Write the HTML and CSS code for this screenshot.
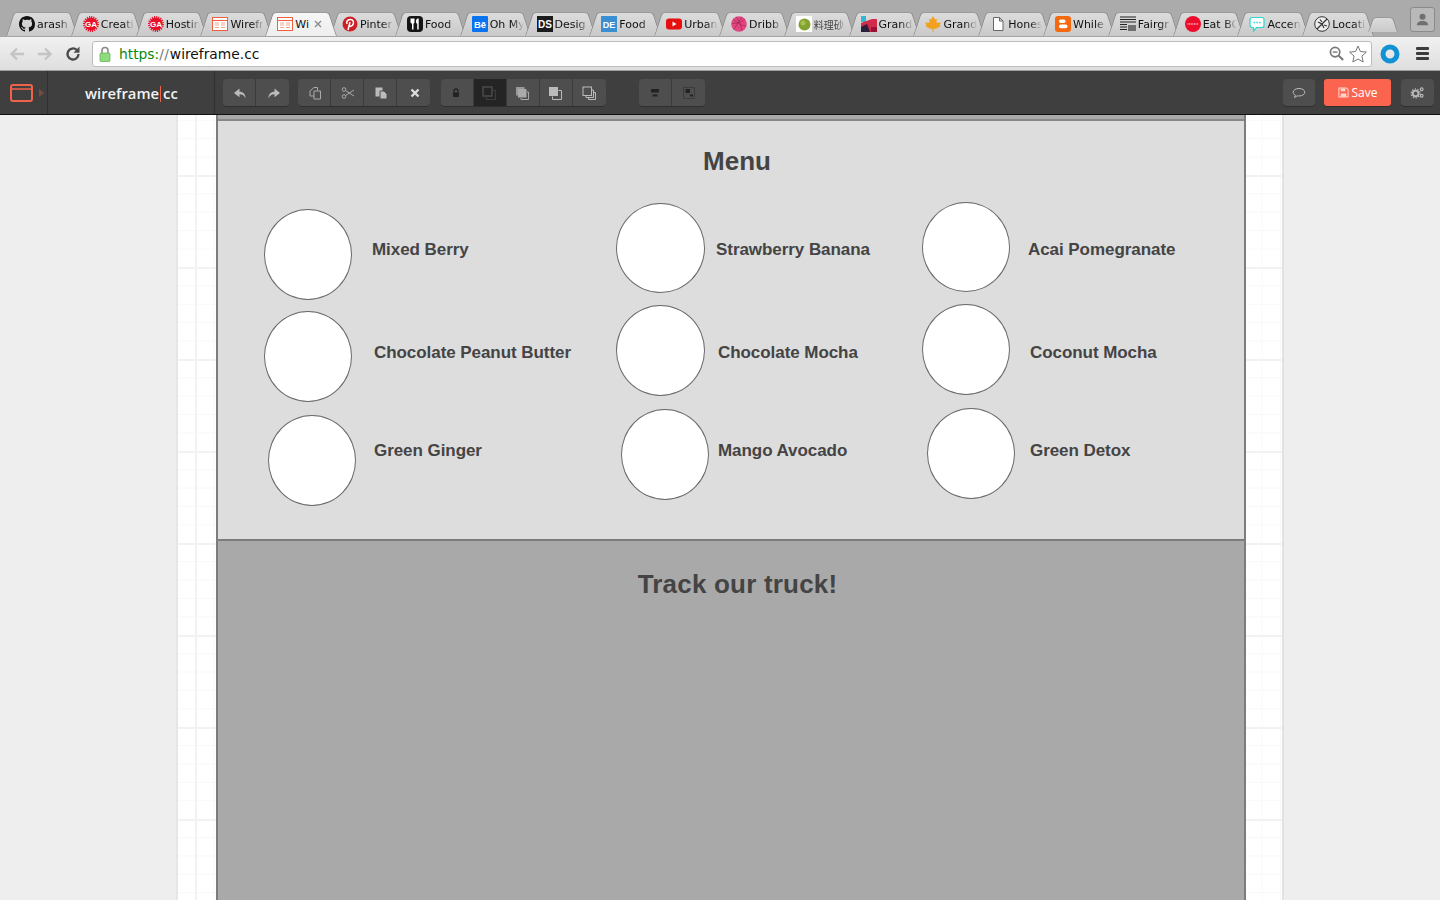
FILE: index.html
```html
<!DOCTYPE html>
<html lang="en">
<head>
<meta charset="utf-8">
<title>wireframe.cc</title>
<link rel="stylesheet" href="styles.css">
</head>
<body>
<div class="tabstrip">
  <div class="tab tab-first"><svg class="fav" viewBox="0 0 16 16"><path fill="#111" d="M8 0C3.58 0 0 3.58 0 8c0 3.54 2.29 6.53 5.47 7.59.4.07.55-.17.55-.38 0-.19-.01-.82-.01-1.49-2.01.37-2.53-.49-2.69-.94-.09-.23-.48-.94-.82-1.13-.28-.15-.68-.52-.01-.53.63-.01 1.08.58 1.23.82.72 1.21 1.87.87 2.33.66.07-.52.28-.87.51-1.07-1.78-.2-3.64-.89-3.64-3.95 0-.87.31-1.59.82-2.15-.08-.2-.36-1.02.08-2.12 0 0 .67-.21 2.2.82.64-.18 1.32-.27 2-.27.68 0 1.36.09 2 .27 1.53-1.04 2.2-.82 2.2-.82.44 1.1.16 1.92.08 2.12.51.56.82 1.27.82 2.15 0 3.07-1.87 3.75-3.65 3.95.29.25.54.73.54 1.48 0 1.07-.01 1.93-.01 2.2 0 .21.15.46.55.38A8.013 8.013 0 0016 8c0-4.42-3.58-8-8-8z"/></svg><span class="title">arash</span></div>
  <div class="tab"><svg class="fav" viewBox="0 0 16 16"><circle cx="8" cy="8" r="6.5" fill="#e8102a" stroke="#e8102a" stroke-width="3" stroke-dasharray="1 1"/><text class="favtext" x="8" y="11" font-size="8" fill="#fff">GA</text></svg><span class="title">Creati</span></div>
  <div class="tab"><svg class="fav" viewBox="0 0 16 16"><circle cx="8" cy="8" r="6.5" fill="#e8102a" stroke="#e8102a" stroke-width="3" stroke-dasharray="1 1"/><text class="favtext" x="8" y="11" font-size="8" fill="#fff">GA</text></svg><span class="title">Hostin</span></div>
  <div class="tab"><svg class="fav" viewBox="0 0 16 16"><rect x=".5" y="1.5" width="15" height="13" fill="#fff" stroke="#f0603c"/><path d="M1 4.5h14" stroke="#f0603c"/><path d="M3 7h4M3 9h4M3 11.5h4M9 7h4M9 9h4M9 11.5h4" stroke="#f5a58c"/></svg><span class="title">Wirefr</span></div>
  <div class="tab tab-active"><svg class="fav" viewBox="0 0 16 16"><rect x=".5" y="1.5" width="15" height="13" fill="#fff" stroke="#f0603c"/><path d="M1 4.5h14" stroke="#f0603c"/><path d="M3 7h4M3 9h4M3 11.5h4M9 7h4M9 9h4M9 11.5h4" stroke="#f5a58c"/></svg><span class="title title-short">Wi</span><svg class="close" viewBox="0 0 8 8"><path d="M1 1l6 6M7 1L1 7" stroke="#888" stroke-width="1.3"/></svg></div>
  <div class="tab"><svg class="fav" viewBox="0 0 16 16"><circle cx="8" cy="8" r="7.5" fill="#cb2027"/><path d="M6 14l2-8M5 8c-1-3 1-4.500 3.500-4.500S12 5.500 11.200 8 8 10.500 7.300 9.500" fill="none" stroke="#fff" stroke-width="1.500"/></svg><span class="title">Pinter</span></div>
  <div class="tab"><svg class="fav" viewBox="0 0 16 16"><rect width="16" height="16" rx="4" fill="#151515"/><path d="M3.500 2.500v3.500c0 1 1 1.500 1.500 1.500v6h1.500v-6c.5 0 1-.5 1-1.500V2.500M5.200 2.500v3M11 2.500c-1.500 0-2 1.500-2 3s.7 2.200 1.200 2.200v5.800h1.500V2.500z" fill="#fff"/></svg><span class="title">Food</span></div>
  <div class="tab"><svg class="fav" viewBox="0 0 16 16"><rect width="16" height="16" rx="1" fill="#0a74f0"/><text class="favtext" x="8" y="11.500" font-size="9.500" fill="#fff">Bē</text></svg><span class="title">Oh My</span></div>
  <div class="tab"><svg class="fav" viewBox="0 0 16 16"><rect width="16" height="16" fill="#1b1b1b"/><text class="favtext" x="8" y="12" font-size="10" fill="#fff">DS</text></svg><span class="title">Desig</span></div>
  <div class="tab"><svg class="fav" viewBox="0 0 16 16"><rect width="16" height="16" fill="#3a8fd2"/><text class="favtext" x="8" y="11.500" font-size="9" fill="#fff">DE</text></svg><span class="title">Food</span></div>
  <div class="tab"><svg class="fav" viewBox="0 0 16 16"><rect y="2.500" width="16" height="11" rx="3" fill="#e61010"/><path d="M6.500 5.500l4 2.500-4 2.500z" fill="#fff"/></svg><span class="title">Urban</span></div>
  <div class="tab"><svg class="fav" viewBox="0 0 16 16"><circle cx="8" cy="8" r="7.800" fill="#e2457f"/><path d="M2.500 3.500C6 7 11 10 15 10M11 1C8 6 4.500 10.500 3 13.500M5 1c3 3.500 5.500 9 6 14M1 7.500C5 7.500 10 7 13.500 3.500" fill="none" stroke="#a92a5a" stroke-width=".8"/></svg><span class="title">Dribb</span></div>
  <div class="tab"><svg class="fav" viewBox="0 0 16 16"><rect width="16" height="16" fill="#fff"/><circle cx="8.500" cy="8.500" r="6" fill="#84a22f"/><circle cx="7" cy="7" r="2.500" fill="#a6bf53"/></svg><span class="title title-cjk">料理砂</span></div>
  <div class="tab"><svg class="fav" viewBox="0 0 16 16"><path d="M0 0h5v6H0z" fill="#35b5d0"/><path d="M0 7l11-4 5 0v13H0z" fill="#d12a4a"/><path d="M0 11l6-3 3 8H0z" fill="#2b1d3c"/><path d="M10 11h6v5h-6z" fill="#9c1237"/></svg><span class="title">Grand</span></div>
  <div class="tab"><svg class="fav" viewBox="0 0 16 16"><path d="M8 0l2 3.500 2-.8-.7 3.800L16 6.800l-1.500 2.500 1 1-4.500 2.500H8.500V16h-1v-3.200H5L.5 10.300l1-1L0 6.800l4.700-.3L4 2.700l2 .8z" fill="#f2a11f"/></svg><span class="title">Grand</span></div>
  <div class="tab"><svg class="fav" viewBox="0 0 16 16"><path d="M3.500 1.500h6l3.500 3.500v9.500H3.500zM9.500 1.500V5H13" fill="#fff" stroke="#666"/></svg><span class="title">Hones</span></div>
  <div class="tab"><svg class="fav" viewBox="0 0 16 16"><rect width="16" height="16" rx="3" fill="#f4690f"/><rect x="4" y="3.500" width="6.500" height="3.500" rx="1.700" fill="#fff"/><rect x="4" y="8.500" width="8.500" height="3.700" rx="1.800" fill="#fff"/></svg><span class="title">While</span></div>
  <div class="tab"><svg class="fav" viewBox="0 0 16 16"><path d="M0 1h16M0 3.500h16M0 6h16M0 8.500h7M0 11h7M0 13.500h7M9 9v6M11 9v6M13 9v6M15 9v6" stroke="#222" stroke-width="1.100"/></svg><span class="title">Fairgr</span></div>
  <div class="tab"><svg class="fav" viewBox="0 0 16 16"><circle cx="8" cy="8" r="8" fill="#ee0c2c"/><path d="M2.500 8h11" stroke="#ffb0b0" stroke-width="1.500" stroke-dasharray="1 .6"/></svg><span class="title">Eat BC</span></div>
  <div class="tab"><svg class="fav" viewBox="0 0 16 16"><path d="M3 1.500h10c1 0 2 1 2 2v6c0 1-1 2-2 2H7.500L4.500 15v-3.500H3c-1 0-2-1-2-2v-6c0-1 1-2 2-2z" fill="#fff" stroke="#25d9cf" stroke-width="1.200"/><path d="M4.500 6.500h7" stroke="#25d9cf" stroke-width="1.500" stroke-dasharray="1.500 1.300"/></svg><span class="title">Accen</span></div>
  <div class="tab"><svg class="fav" viewBox="0 0 16 16"><circle cx="8" cy="8" r="7.300" fill="#eee" stroke="#333"/><path d="M3 13L13 3M4 6l4 2 2 4M6 3.500l2 2.500M10 9l3 1" fill="none" stroke="#333" stroke-width="1.200"/></svg><span class="title">Locati</span></div>
  <div class="tab tab-new"></div>
  <div class="profile"><svg viewBox="0 0 16 16" class="profile-icon"><circle cx="8" cy="5" r="3.200" fill="#6f6f6f"/><path d="M2 14c0-3.500 3-4.500 6-4.500s6 1 6 4.500z" fill="#6f6f6f"/></svg></div>
</div>

<div class="navbar">
  <svg class="nav-ic" viewBox="0 0 18 18"><path d="M16 9H4M9 3.500L3.500 9 9 14.500" fill="none" stroke="#c4c4c4" stroke-width="2.400"/></svg>
  <svg class="nav-ic" viewBox="0 0 18 18"><path d="M2 9h12M9 3.500L14.500 9 9 14.500" fill="none" stroke="#c4c4c4" stroke-width="2.400"/></svg>
  <svg class="nav-ic" viewBox="0 0 18 18"><path d="M14.500 9a5.500 5.500 0 1 1-1.800-4.100" fill="none" stroke="#4a4a4a" stroke-width="2.300"/><path d="M15.500 1.500v6.200H9.500z" fill="#4a4a4a"/></svg>
  <div class="omnibox">
    <svg class="lock" viewBox="0 0 12 16"><path d="M3 7V4.500a3 3 0 0 1 6 0V7" fill="none" stroke="#888" stroke-width="1.500"/><rect x="1" y="7" width="10" height="8.500" rx="1" fill="#8fdc7c" stroke="#63a955" stroke-width=".7"/></svg>
    <span class="url"><span class="url-https">https:</span><span class="url-slash">/ /</span>wireframe.cc</span>
    <svg class="omni-ic zoomout" viewBox="0 0 16 16"><circle cx="6.500" cy="6.500" r="5" fill="none" stroke="#777" stroke-width="1.800"/><path d="M10.500 10.500l4.500 4.500" stroke="#777" stroke-width="2.200"/><path d="M4 6.500h5" stroke="#777" stroke-width="1.500"/></svg>
    <svg class="omni-ic star" viewBox="0 0 18 18"><path d="M9 1l2.400 5.500 6 .6-4.500 4 1.300 5.900L9 14l-5.200 3 1.300-5.900-4.500-4 6-.6z" fill="#fff" stroke="#777"/></svg>
  </div>
  <svg class="ext" viewBox="0 0 20 20"><circle cx="10" cy="10" r="7" fill="none" stroke="#1192d4" stroke-width="5"/></svg>
  <div class="burger"><i></i><i></i><i></i></div>
</div>

<header class="appbar">
  <div class="brandicon">
    <svg class="brand-svg" viewBox="0 0 23 18"><rect x="1" y="1" width="21" height="16" rx="2" fill="none" stroke="#f0634a" stroke-width="2"/><path d="M1 5h21" stroke="#f0634a" stroke-width="1.500"/></svg>
    <span class="caret"></span>
  </div>
  <div class="brand">wireframe<span class="brand-sep"></span>cc</div>
  <div class="group group-history">
    <div class="btn"><svg class="ic" viewBox="0 0 14 14"><path d="M12.500 12.500c0-4.500-2.200-6.800-6-6.800V2.500L1 7l5.500 4.300V8.300c3 0 5 1.500 6 4.200z" fill="#bbb"/></svg></div>
    <div class="btn"><svg class="ic" viewBox="0 0 14 14"><path d="M1.500 12.500c0-4.500 2.200-6.800 6-6.800V2.500L13 7l-5.500 4.300V8.300c-3 0-5 1.500-6 4.200z" fill="#bbb"/></svg></div>
  </div>
  <div class="group group-edit">
    <div class="btn"><svg class="ic" viewBox="0 0 14 14"><path d="M6 1.500h3.500v3M6 1.500L2 5v5h4M6 5h6.500v8H6z" fill="none" stroke="#aaa"/></svg></div>
    <div class="btn"><svg class="ic" viewBox="0 0 14 14"><circle cx="3" cy="3.500" r="1.800" fill="none" stroke="#aaa"/><circle cx="3" cy="10.500" r="1.800" fill="none" stroke="#aaa"/><path d="M4.500 4.500L13 10M4.500 9.500L13 4" stroke="#aaa"/></svg></div>
    <div class="btn"><svg class="ic" viewBox="0 0 14 14"><path d="M1.500 1.500h7v9h-7z" fill="#bbb"/><path d="M6 5h4l3 3v5H6z" fill="#bbb" stroke="#4e4e4e"/></svg></div>
    <div class="btn"><svg class="ic" viewBox="0 0 14 14"><path d="M3.500 3.500l7 7M10.500 3.500l-7 7" stroke="#ddd" stroke-width="2.400"/></svg></div>
  </div>
  <div class="group group-order">
    <div class="btn"><svg class="ic" viewBox="0 0 14 14"><path d="M5 6.500V5a2 2 0 0 1 4 0v1.500" fill="none" stroke="#222" stroke-width="1.300"/><rect x="4" y="6.500" width="6" height="4.500" rx=".7" fill="#222"/></svg></div>
    <div class="btn btn-dark"><svg class="ic" viewBox="0 0 14 14"><rect x="1" y="1" width="9" height="9" fill="none" stroke="#4a4a4a" stroke-width="1.500"/><path d="M10.500 4.500h3v9h-9v-3" fill="none" stroke="#3c3c3c" stroke-width="1.200"/></svg></div>
    <div class="btn"><svg class="ic" viewBox="0 0 14 14"><rect x="1" y="1" width="8.500" height="8.500" fill="#999"/><rect x="3" y="3" width="8.500" height="8.500" fill="#aaa"/><path d="M12 6h1.500v7.500H6V12" fill="none" stroke="#aaa"/></svg></div>
    <div class="btn"><svg class="ic" viewBox="0 0 14 14"><rect x="1" y="1" width="9" height="9" fill="#bbb"/><path d="M10.500 4.500h3v9h-9v-3" fill="none" stroke="#bbb"/></svg></div>
    <div class="btn"><svg class="ic" viewBox="0 0 14 14"><rect x="1" y="1" width="8.500" height="8.500" fill="none" stroke="#bbb"/><path d="M4 9.500V11.500h7.500V4H9.500" fill="none" stroke="#bbb"/><path d="M11.500 6.500h2v7H6.500v-2" fill="none" stroke="#bbb"/></svg></div>
  </div>
  <div class="group group-align">
    <div class="btn"><svg class="ic" viewBox="0 0 14 14"><rect x="3" y="3" width="8" height="3.500" fill="#222"/><rect x="4.500" y="8.500" width="5" height="2" fill="#222"/></svg></div>
    <div class="btn"><svg class="ic" viewBox="0 0 14 14"><rect x="1.500" y="1.500" width="11" height="11" fill="none" stroke="#2a2a2a" stroke-dasharray="1 1"/><rect x="3.500" y="3" width="4.500" height="4" fill="#222"/><rect x="8" y="8.500" width="3" height="2" fill="#222"/></svg></div>
  </div>
  <div class="appbar-right">
    <div class="btn btn-solo btn-comment"><svg class="ic" viewBox="0 0 14 14"><path d="M7 2.500c3.300 0 5.800 1.600 5.800 3.700S10.300 10 7 10c-.6 0-1.200 0-1.700-.2L2.500 11.500l.8-2.300C2 8.500 1.200 7.500 1.200 6.200c0-2.100 2.500-3.700 5.800-3.700z" fill="none" stroke="#bbb"/></svg></div>
    <div class="save"><svg class="save-ic" viewBox="0 0 12 12"><path d="M1 1h8l2 2v8H1z" fill="none" stroke="#ffd9d0" stroke-width="1.100"/><path d="M3 1.500h5v3H3zM3 7h6v3.500H3z" fill="#ffd9d0"/></svg>Save</div>
    <div class="btn btn-solo"><svg class="ic ic-gears" viewBox="0 0 16 14"><circle cx="6" cy="8" r="3" fill="none" stroke="#bbb" stroke-width="2"/><circle cx="6" cy="8" r="4.800" fill="none" stroke="#bbb" stroke-width="1.300" stroke-dasharray="1.500 1.500"/><circle cx="12.500" cy="3.500" r="1.500" fill="none" stroke="#bbb" stroke-width="1.200"/><circle cx="12.500" cy="10.500" r="1.500" fill="none" stroke="#bbb" stroke-width="1.200"/></svg></div>
  </div>
</header>

<main class="workspace">
  <div class="paper">
    <div class="page">
      <div class="page-strip"></div>
      <section class="menu">
        <h2 class="heading">Menu</h2>
        <div class="circle c1"></div><div class="label l1">Mixed Berry</div>
        <div class="circle c2"></div><div class="label l2">Strawberry Banana</div>
        <div class="circle c3"></div><div class="label l3">Acai Pomegranate</div>
        <div class="circle c4"></div><div class="label l4">Chocolate Peanut Butter</div>
        <div class="circle c5"></div><div class="label l5">Chocolate Mocha</div>
        <div class="circle c6"></div><div class="label l6">Coconut Mocha</div>
        <div class="circle c7"></div><div class="label l7">Green Ginger</div>
        <div class="circle c8"></div><div class="label l8">Mango Avocado</div>
        <div class="circle c9"></div><div class="label l9">Green Detox</div>
      </section>
      <section class="truck">
        <h2 class="heading">Track our truck!</h2>
      </section>
    </div>
  </div>
</main>
</body>
</html>
```
FILE: styles.css
```css
* { box-sizing: border-box; }
html, body { margin: 0; height: 100%; }
body {
  width: 1440px;
  height: 900px;
  overflow: hidden;
  display: flex;
  flex-direction: column;
  font-family: "Liberation Sans", Arial, sans-serif;
  background: #eee;
}

/* browser tabs */
.tabstrip {
  flex: none;
  height: 36px;
  padding: 12px 0 0 6px;
  display: flex;
  background: #ababab;
  position: relative;
}
.tab {
  flex: none;
  width: 71px;
  height: 24px;
  margin-right: -6.2px;
  padding: 4px 0 0 12px;
  display: flex;
  position: relative;
  font: 11px/16px "DejaVu Sans", sans-serif;
  color: #111;
}
.tab-first { padding-left: 13px; }
.tab::before, .tab::after {
  content: "";
  position: absolute;
  top: 0;
  bottom: 0;
  width: 50%;
  background: linear-gradient(#dcdcdc, #c9c9c9);
  border-top: 1px solid #9a9a9a;
}
.tab::before {
  left: 0;
  transform-origin: bottom;
  transform: skewX(-18deg);
  border-left: 1px solid #8c8c8c;
  border-top-left-radius: 4px;
}
.tab::after {
  right: 0;
  transform-origin: bottom;
  transform: skewX(18deg);
  border-right: 1px solid #8c8c8c;
  border-top-right-radius: 4px;
}
.tab-active { z-index: 2; }
.tab-active::before, .tab-active::after { background: linear-gradient(#f6f6f6, #eeeeee); }
.tab-new { width: 30px; height: 15px; margin: 5px 0 0 1px; padding: 0; }
.fav, .title, .close { position: relative; z-index: 1; }
.fav { flex: none; width: 16px; height: 16px; margin-right: 2px; }
.favtext {
  font-family: "Liberation Sans", sans-serif;
  font-weight: 700;
  text-anchor: middle;
}
.title {
  flex: none;
  width: 36px;
  height: 16px;
  margin-top: 1px;
  white-space: nowrap;
  -webkit-mask-image: linear-gradient(90deg, #000 22px, transparent 34px);
  mask-image: linear-gradient(90deg, #000 22px, transparent 34px);
}
.title-short { width: 14px; -webkit-mask-image: none; mask-image: none; }
.title-cjk { font-family: "Noto Sans CJK SC", sans-serif; font-size: 10px; color: #444; }
.close { flex: none; width: 8px; height: 8px; margin: 4px 0 0 5px; }
.profile {
  position: absolute;
  right: 5px;
  top: 7px;
  width: 25px;
  height: 25px;
  border: 1px solid #8a8a8a;
  border-radius: 3px;
  background: #b9b9b9;
  display: flex;
  align-items: center;
  justify-content: center;
}
.profile-icon { width: 15px; height: 15px; }

/* browser toolbar */
.navbar {
  flex: none;
  height: 35px;
  padding: 5px 0 5px 8px;
  display: flex;
  align-items: center;
  background: linear-gradient(#f1f1f1, #dedede);
  border-top: 1px solid #a5a5a5;
  border-bottom: 1px solid #9f9f9f;
}
.nav-ic { flex: none; width: 18px; height: 18px; margin-right: 10px; }
.omnibox {
  flex: none;
  width: 1280px;
  height: 26px;
  margin: 0 8px 0 0;
  padding: 0 4px 0 6px;
  display: flex;
  align-items: center;
  background: #fff;
  border: 1px solid #bdbdbd;
  border-radius: 3px;
}
.lock { flex: none; width: 12px; height: 16px; margin-right: 8px; }
.url { flex: 1; font: 13.8px/18px "DejaVu Sans", sans-serif; color: #111; }
.url-https { color: #0a8a10; }
.url-slash { color: #777; letter-spacing: -2px; margin-right: 3px; }
.omni-ic { flex: none; }
.zoomout { width: 15px; height: 15px; margin-right: 5px; }
.star { width: 18px; height: 18px; }
.ext { flex: none; width: 20px; height: 20px; margin-right: 16px; }
.burger { flex: none; width: 13px; display: flex; flex-direction: column; gap: 2.500px; }
.burger i { display: block; height: 2.500px; background: #3c3c3c; border-radius: 1px; }

/* app toolbar */
.appbar {
  flex: none;
  height: 44px;
  padding-right: 6px;
  display: flex;
  align-items: flex-start;
  background: #3f3f3f;
  border-bottom: 1px solid #111;
}
.brandicon {
  flex: none;
  width: 48px;
  height: 43px;
  padding: 13px 0 0 10px;
  display: flex;
  align-items: flex-start;
  border-right: 1px solid #2f2f2f;
}
.brand-svg { flex: none; width: 23px; height: 18px; }
.caret {
  flex: none;
  width: 0;
  height: 0;
  margin: 5px 0 0 6px;
  border: 4px solid transparent;
  border-left: 5px solid #7a4a40;
  border-right: 0;
}
.brand {
  flex: none;
  width: 167px;
  height: 43px;
  padding-left: 37px;
  font: 600 14.8px/44px "Open Sans", sans-serif;
  color: #f2f2f2;
  border-right: 1px solid #2f2f2f;
}
.brand-sep {
  display: inline-block;
  width: 1px;
  height: 16px;
  margin: 0 2px 0 1px;
  vertical-align: -3px;
  background: #f0634a;
}
.group {
  flex: none;
  display: flex;
  margin: 8px 0 0 8px;
  border-radius: 4px;
  overflow: hidden;
  box-shadow: 0 1px 0 #2f2f2f;
}
.group-edit { margin-left: 9px; }
.group-order { margin-left: 11px; }
.group-align { margin-left: 33px; }
.btn {
  flex: none;
  width: 33px;
  height: 27px;
  display: flex;
  align-items: center;
  justify-content: center;
  background: #4e4e4e;
  border-right: 1px solid #3a3a3a;
}
.group-history .btn, .group-edit .btn { padding-left: 2px; }
.group-order .btn { padding-right: 2px; }
.btn:last-child { border-right: 0; }
.btn-dark { background: #242424; }
.ic { flex: none; width: 14px; height: 14px; }
.ic-gears { width: 15px; height: 13px; }
.appbar-right { margin-left: auto; display: flex; margin-top: 8px; gap: 9px; }
.btn-solo { border-right: 0; border-radius: 4px; box-shadow: 0 1px 0 #2f2f2f; }
.btn-comment { width: 32px; }
.save {
  flex: none;
  width: 67px;
  height: 27px;
  margin-right: 1px;
  display: flex;
  align-items: center;
  justify-content: center;
  gap: 3px;
  font: 12px "Open Sans", sans-serif;
  color: #fff;
  background: #fb6550;
  border-radius: 3px;
  box-shadow: 0 1px 0 #2f2f2f;
}
.save-ic { flex: none; width: 11px; height: 11px; }

/* canvas */
.workspace {
  flex: 1;
  min-height: 0;
  padding-left: 178px;
  overflow: hidden;
  background: #eee;
}
.paper {
  width: 1104px;
  height: 100%;
  padding-left: 38px;
  background-color: #fff;
  background-image:
    linear-gradient(#f2f2f2 2px, transparent 2px),
    linear-gradient(90deg, #f2f2f2 2px, transparent 2px),
    linear-gradient(#f8f8f8 1px, transparent 1px),
    linear-gradient(90deg, #f8f8f8 1px, transparent 1px);
  background-size: 92px 92px, 92px 92px, 18.4px 18.4px, 18.4px 18.4px;
  background-position: 0 60px, 17px 0, 0 4.800px, 17px 0;
  box-shadow: -2px 0 0 #e6e6e6, 2px 0 0 #e2e2e2;
}
.page {
  width: 1030px;
  height: 100%;
  display: flex;
  flex-direction: column;
  border-left: 2px solid #7c7c7c;
  border-right: 2px solid #7c7c7c;
}
.page-strip { flex: none; height: 6px; background: #a9a9a9; border-bottom: 2px solid #888; }
.menu {
  flex: none;
  height: 420px;
  position: relative;
  background: #ddd;
  border-bottom: 2px solid #7c7c7c;
}
.heading {
  margin: 0;
  padding: 24px 0 0 12px;
  font: 700 26px/32px "Liberation Sans", Arial, sans-serif;
  color: #444;
  text-align: center;
}
.truck { flex: 1; background: #a9a9a9; }
.truck .heading { padding: 27px 0 0 13px; letter-spacing: .2px; }

.circle {
  position: absolute;
  width: 88px;
  height: 91px;
  background: #fff;
  border: 1.5px solid #6a6a6a;
  border-radius: 50%;
}
.c1 { left: 45.5px; top: 88px; }
.c2 { left: 398px; top: 82px; width: 89px; height: 90px; }
.c3 { left: 704px; top: 81px; height: 90px; }
.c4 { left: 45.5px; top: 189.5px; }
.c5 { left: 398px; top: 183.5px; width: 89px; }
.c6 { left: 704px; top: 182.5px; }
.c7 { left: 49.5px; top: 293.5px; }
.c8 { left: 403px; top: 287.5px; }
.c9 { left: 709px; top: 286.5px; }

.label {
  position: absolute;
  font: 700 17px/20px "Liberation Sans", Arial, sans-serif;
  letter-spacing: -.06px;
  color: #444;
  white-space: nowrap;
}
.l1 { left: 154px; top: 119px; }
.l2 { left: 498px; top: 119px; }
.l3 { left: 810px; top: 119px; }
.l4 { left: 156px; top: 222px; }
.l5 { left: 500px; top: 222px; }
.l6 { left: 812px; top: 222px; }
.l7 { left: 156px; top: 320px; }
.l8 { left: 500px; top: 320px; }
.l9 { left: 812px; top: 320px; }
```
